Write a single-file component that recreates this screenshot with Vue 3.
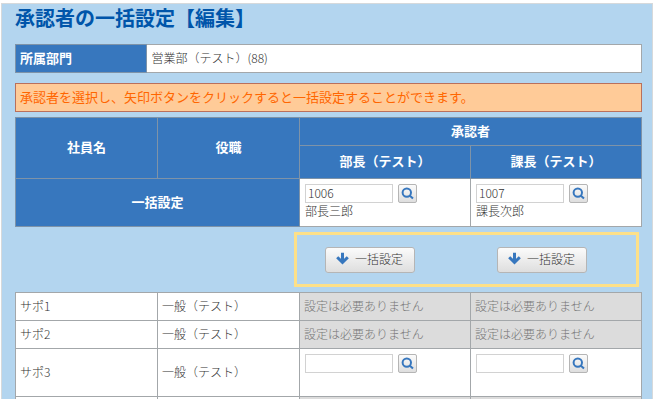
<script setup>
import { ref } from 'vue'

const approvers = ref([
  { title: '部長（テスト）', code: '1006', name: '部長三郎' },
  { title: '課長（テスト）', code: '1007', name: '課長次郎' },
])

const employees = ref([
  { id: 1, name: 'サポ1', post: '一般（テスト）', editable: false, note: '設定は必要ありません', codes: ['', ''] },
  { id: 2, name: 'サポ2', post: '一般（テスト）', editable: false, note: '設定は必要ありません', codes: ['', ''] },
  { id: 3, name: 'サポ3', post: '一般（テスト）', editable: true, note: '', codes: ['', ''] },
  { id: 4, name: '', post: '', editable: false, note: '', codes: ['', ''] },
])

function applyAll(index) {
  for (const employee of employees.value) {
    if (employee.editable) employee.codes[index] = approvers.value[index].code
  }
}
</script>

<template>
  <main class="panel">
    <h1>承認者の一括設定【編集】</h1>

    <table class="dept">
      <tbody>
        <tr>
          <th scope="row">所属部門</th>
          <td>営業部（テスト）(88)</td>
        </tr>
      </tbody>
    </table>

    <p class="notice">承認者を選択し、矢印ボタンをクリックすると一括設定することができます。</p>

    <table class="grid">
      <colgroup>
        <col class="col-name" />
        <col class="col-post" />
        <col />
        <col />
      </colgroup>
      <thead>
        <tr class="head-top">
          <th rowspan="2">社員名</th>
          <th rowspan="2">役職</th>
          <th colspan="2">承認者</th>
        </tr>
        <tr class="head-sub">
          <th v-for="a in approvers" :key="a.title">{{ a.title }}</th>
        </tr>
      </thead>
      <tbody>
        <tr class="tall">
          <th colspan="2" scope="row">一括設定</th>
          <td v-for="a in approvers" :key="a.title">
            <div class="picker">
              <input v-model="a.code" type="text" :aria-label="a.title" />
              <button type="button" class="search" :aria-label="a.title">
                <svg viewBox="0 0 13 13" width="13" height="13">
                  <circle cx="5.8" cy="5.6" r="4.2" />
                  <path d="M8.6 8.4 L12 11.6" />
                </svg>
              </button>
            </div>
            <div class="who">{{ a.name }}</div>
          </td>
        </tr>
        <tr class="apply-row">
          <td colspan="2"></td>
          <td colspan="2">
            <div class="highlight">
              <button v-for="(a, i) in approvers" :key="a.title" type="button" class="apply" @click="applyAll(i)">
                <svg viewBox="0 0 13 13" width="13" height="13">
                  <path d="M6.5 0.8 V10 M1.2 5.2 L6.5 10.4 L11.8 5.2" />
                </svg>
                一括設定
              </button>
            </div>
          </td>
        </tr>
        <tr v-for="e in employees" :key="e.id" :class="{ tall: e.editable }">
          <td>{{ e.name }}</td>
          <td>{{ e.post }}</td>
          <template v-if="e.editable">
            <td v-for="(a, i) in approvers" :key="a.title">
              <div class="picker">
                <input v-model="e.codes[i]" type="text" :aria-label="a.title" />
                <button type="button" class="search" :aria-label="a.title">
                  <svg viewBox="0 0 13 13" width="13" height="13">
                    <circle cx="5.8" cy="5.6" r="4.2" />
                    <path d="M8.6 8.4 L12 11.6" />
                  </svg>
                </button>
              </div>
            </td>
          </template>
          <template v-else>
            <td v-for="a in approvers" :key="a.title" class="off">{{ e.note }}</td>
          </template>
        </tr>
      </tbody>
    </table>
  </main>
</template>

<style>
body {
  background: #fff;
}
</style>

<style scoped>
.panel {
  box-sizing: border-box;
  height: calc(100vh - 4px);
  margin: 3px 2px 0 1px;
  padding: 0 10px 0 13px;
  overflow: hidden;
  background: #b3d5ef;
  border: 1px solid #d6d9db;
  border-bottom: 0;
  color: #333;
  font-family: "Noto Sans CJK JP", sans-serif;
  font-size: 12px;
  font-weight: 300;
  line-height: 16px;
}

h1 {
  margin: 0 0 12px;
  color: #0055aa;
  font-size: 20px;
  font-weight: 700;
  line-height: 28px;
}

table {
  width: 100%;
  border-collapse: collapse;
  table-layout: fixed;
}

th,
td {
  box-sizing: border-box;
  height: 28px;
  padding: 0 4px 2px;
  border: 1px solid #a3a7aa;
  text-align: left;
}

th {
  background: #3777be;
  border-color: #7e93a8;
  color: #fff;
  font-size: 13px;
  font-weight: 700;
}

td {
  background: #fff;
}

.dept th {
  width: 21%;
}

.notice {
  margin: 10px 0 5px;
  padding: 4px 4px 6px;
  background: #ffcb98;
  border: 1px solid #b9705c;
  color: #ff6600;
  font-size: 13px;
  font-weight: 400;
  line-height: 17px;
}

.col-name,
.col-post {
  width: 142px;
}

.grid th {
  text-align: center;
}

.head-sub th {
  height: 33px;
}

.tall > * {
  height: 48px;
}

.tall td:has(.picker) {
  padding: 5px 5px 0;
  vertical-align: top;
}

.picker {
  display: flex;
  align-items: center;
  gap: 5px;
}

.picker input {
  box-sizing: border-box;
  width: 88px;
  height: 19px;
  padding: 0 2px 2px;
  background: #fff;
  border: 1px solid #d2d2d2;
  color: #333;
  font: inherit;
}

.search,
.apply {
  display: flex;
  align-items: center;
  justify-content: center;
  box-sizing: border-box;
  padding: 0;
  background: linear-gradient(#fbfbfb, #dedede);
  border: 1px solid #b5b5b5;
  border-radius: 2px;
  color: #333;
  font: inherit;
}

.search {
  width: 19px;
  height: 19px;
}

svg {
  flex: none;
  fill: none;
  stroke: #3777be;
  stroke-width: 2;
}

.apply svg {
  stroke-width: 3;
}

.apply-row td {
  height: 66px;
  padding: 0;
  background: transparent;
  border-width: 1px 0;
}

.highlight {
  display: flex;
  align-items: center;
  gap: 82px;
  box-sizing: border-box;
  height: 55px;
  margin: 0 3px 0 -6px;
  padding-left: 28px;
  border: 3px solid #fde089;
}

.apply {
  gap: 6px;
  width: 90px;
  height: 26px;
  padding-bottom: 2px;
  border-radius: 3px;
}

.off {
  background: #dcdcdc;
  color: #777;
}
</style>
